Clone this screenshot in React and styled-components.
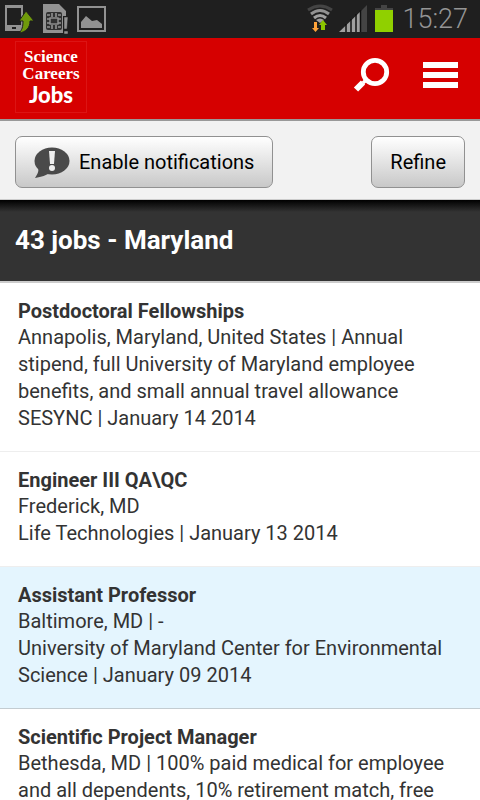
import styled, { createGlobalStyle } from 'styled-components'

const GlobalStyle = createGlobalStyle`
  * {
    box-sizing: border-box;
  }

  body {
    margin: 0;
    font-family: Roboto, 'Liberation Sans', sans-serif;
    background: #ffffff;
    color: #333333;
  }
`

const Page = styled.div`
  display: flex;
  flex-direction: column;
  height: 100vh;
  overflow: hidden;

  > * {
    flex-shrink: 0;
  }
`

const StatusBar = styled.div`
  display: flex;
  justify-content: space-between;
  height: 38px;
  padding: 0 12px 0 4px;
  background: #1f1f1f;
`

const Clock = styled.time`
  margin-left: 4px;
  font-size: 27px;
  font-weight: 300;
  line-height: 38px;
  color: #959595;
`

const StatusGroup = styled.div`
  display: flex;
`

const Header = styled.header`
  display: flex;
  align-items: center;
  justify-content: space-between;
  height: 83px;
  padding: 0 20px 3px 15px;
  background: #d60000;
  border-bottom: 2px solid #999999;
`

const Logo = styled.a`
  display: flex;
  flex-direction: column;
  align-items: center;
  width: 72px;
  height: 72px;
  padding-top: 6px;
  border: 1px solid #dc1414;
  color: #ffffff;
  text-decoration: none;
`

const LogoName = styled.span`
  font-family: 'Liberation Serif', serif;
  font-size: 17px;
  font-weight: 700;
  line-height: 17px;
`

const LogoJobs = styled.span`
  font-family: Lato, sans-serif;
  font-size: 22px;
  font-weight: 900;
  line-height: 26px;
`

const HeaderActions = styled.div`
  display: flex;
  align-items: center;
  gap: 33px;
  padding-bottom: 4px;
`

const IconButton = styled.button`
  display: flex;
  padding: 0;
  border: 0;
  background: none;
  color: #ffffff;
`

const Toolbar = styled.div`
  display: flex;
  align-items: center;
  justify-content: space-between;
  height: 79px;
  padding: 4px 15px 0;
  background: #f2f2f2;
  border-bottom: 1px solid #cccccc;
`

const ToolbarButton = styled.button`
  display: flex;
  align-items: center;
  gap: 9px;
  height: 52px;
  padding: 0 18px;
  border: 1px solid #919191;
  border-radius: 7px;
  background: linear-gradient(#ffffff, #c8c8c8);
  font-family: inherit;
  font-size: 20px;
  color: #000000;
`

const ResultsBar = styled.div`
  height: 83px;
  padding: 0 15px;
  background: linear-gradient(#000000, #333333 12px);
  border-bottom: 2px solid #cccccc;
`

const ResultsTitle = styled.h1`
  margin: 0;
  font-size: 26px;
  font-weight: 700;
  line-height: 80px;
  color: #ffffff;
`

const JobList = styled.ul`
  margin: 0;
  padding: 0;
  list-style: none;
`

const JobItem = styled.li`
  padding: 15px 18px 19px;
  background: ${props => props.$highlighted ? '#e4f5fe' : '#ffffff'};
  border-bottom: 1px solid ${props => props.$highlighted ? '#c3ccd1' : '#eeeeee'};
`

const JobTitle = styled.h2`
  margin: 0;
  font-size: 20px;
  font-weight: 700;
  line-height: 26px;
`

const JobText = styled.p`
  margin: 0;
  font-size: 20px;
  line-height: 27px;
`

const PhoneIcon = () => (
  <svg width="32" height="38" viewBox="0 0 32 38" aria-hidden="true">
    <path d="M1 5h18v26H1zM3 8v17h14V8z" fill="#929292" fillRule="evenodd" />
    <rect x="8" y="27" width="4" height="2" fill="#1f1f1f" />
    <path
      d="M22 11l8 10h-4c0 7-4 11-11 12 3-3 4-6 4-12h-4z"
      fill="#6f9a0b"
      stroke="#1f1f1f"
      strokeWidth="1"
    />
  </svg>
)

const SimIcon = () => (
  <svg width="34" height="38" viewBox="0 0 34 38" aria-hidden="true">
    <path d="M7 4h16l7 7v5h-3v17H7z" fill="#929292" />
    <rect x="10" y="12" width="16" height="18" rx="2" fill="#303030" />
    <path
      d="M11 15h3M11 19h3M11 23h3M11 27h3M22 15h3M22 19h3M22 23h3M22 27h3M16 13v4M20 13v4M16 25v4M20 25v4"
      stroke="#929292"
      strokeWidth="1.6"
    />
    <rect x="14" y="18" width="8" height="6" fill="#303030" stroke="#929292" strokeWidth="1.4" />
    <path d="M28 17h4l-1 12h-3zM28 31h4v3h-4z" fill="#929292" stroke="#1f1f1f" strokeWidth="0.5" />
  </svg>
)

const PictureIcon = () => (
  <svg width="38" height="38" viewBox="0 0 38 38" aria-hidden="true">
    <rect x="8" y="7" width="27" height="24" fill="none" stroke="#929292" strokeWidth="2" />
    <path d="M11 28v-6l5-6 6 5 5-1 5 4v4z" fill="#929292" />
  </svg>
)

const WifiIcon = () => (
  <svg width="36" height="38" viewBox="0 0 36 38" aria-hidden="true">
    <g fill="none" strokeWidth="3">
      <path d="M5 10q12-8 24 0" stroke="#444444" />
      <path d="M8 14q9-7 18 0" stroke="#929292" />
      <path d="M11 18q6-5 12 0" stroke="#a0a0a0" />
    </g>
    <path d="M13 20q4-3 8 0l-4 3z" fill="#a0a0a0" />
    <path d="M11 22h3v6h2l-3.500 4-3.500-4h2z" fill="#ffa43a" />
    <path d="M18 30h4v-5h2l-4-5-4 5h2z" fill="#8bc500" />
  </svg>
)

const SignalIcon = () => (
  <svg width="31" height="38" viewBox="0 0 31 38" aria-hidden="true">
    <path d="M0 32L22 11v21z" fill="#a0a0a0" />
    <path d="M22 11l6-6v27h-6z" fill="#444444" />
    <path d="M7 24v8M12 19v13M17 14v18M21.500 10v22" stroke="#101010" strokeWidth="1.5" />
  </svg>
)

const BatteryIcon = () => (
  <svg width="28" height="38" viewBox="0 0 28 38" aria-hidden="true">
    <path d="M11 5h6v3h6v2H5V8h6z" fill="#444444" />
    <rect x="5" y="10" width="18" height="22" fill="#90d000" />
  </svg>
)

const SearchIcon = () => (
  <svg width="37" height="36" viewBox="0 0 37 36" aria-hidden="true">
    <circle cx="22" cy="15" r="11.700" fill="none" stroke="currentColor" strokeWidth="4.800" />
    <path d="M14 22l-4 4" stroke="currentColor" strokeWidth="3.500" />
    <path d="M10 25.500L3 32.500" stroke="currentColor" strokeWidth="6" />
  </svg>
)

const MenuIcon = () => (
  <svg width="37" height="26" viewBox="0 0 37 26" aria-hidden="true">
    <path d="M0 0h35v6H0zM0 10h35v6H0zM0 20h35v6H0z" fill="currentColor" />
  </svg>
)

const AlertIcon = () => (
  <svg width="36" height="32" viewBox="0 0 36 32" aria-hidden="true">
    <ellipse cx="18" cy="15" rx="17.500" ry="13.500" fill="#4a4a4a" />
    <path d="M4 21c1 4 0 6-3 11 7-1 11-3 15-5z" fill="#4a4a4a" />
    <path d="M15 5h6l-1 13h-4z" fill="#eeeeee" />
    <circle cx="18" cy="22" r="3" fill="#eeeeee" />
  </svg>
)

const jobs = [
  {
    title: 'Postdoctoral Fellowships',
    summary: 'Annapolis, Maryland, United States | Annual stipend, full University of Maryland employee benefits, and small annual travel allowance',
    employer: 'SESYNC | January 14 2014',
  },
  {
    title: 'Engineer III QA\\QC',
    summary: 'Frederick, MD',
    employer: 'Life Technologies | January 13 2014',
  },
  {
    title: 'Assistant Professor',
    summary: 'Baltimore, MD | -',
    employer: 'University of Maryland Center for Environmental Science | January 09 2014',
    highlighted: true,
  },
  {
    title: 'Scientific Project Manager',
    summary: 'Bethesda, MD | 100% paid medical for employee and all dependents, 10% retirement match, free',
  },
]

export default function App() {
  return (
    <>
      <GlobalStyle />
      <Page>
        <StatusBar>
          <StatusGroup>
            <PhoneIcon />
            <SimIcon />
            <PictureIcon />
          </StatusGroup>
          <StatusGroup>
            <WifiIcon />
            <SignalIcon />
            <BatteryIcon />
            <Clock>15:27</Clock>
          </StatusGroup>
        </StatusBar>
        <Header>
          <Logo href="#">
            <LogoName>Science</LogoName>
            <LogoName>Careers</LogoName>
            <LogoJobs>Jobs</LogoJobs>
          </Logo>
          <HeaderActions>
            <IconButton aria-label="Search">
              <SearchIcon />
            </IconButton>
            <IconButton aria-label="Menu">
              <MenuIcon />
            </IconButton>
          </HeaderActions>
        </Header>
        <Toolbar>
          <ToolbarButton>
            <AlertIcon />
            Enable notifications
          </ToolbarButton>
          <ToolbarButton>Refine</ToolbarButton>
        </Toolbar>
        <ResultsBar>
          <ResultsTitle>43 jobs - Maryland</ResultsTitle>
        </ResultsBar>
        <JobList>
          {jobs.map(job => (
            <JobItem key={job.title} $highlighted={job.highlighted}>
              <JobTitle>{job.title}</JobTitle>
              <JobText>{job.summary}</JobText>
              {job.employer && <JobText>{job.employer}</JobText>}
            </JobItem>
          ))}
        </JobList>
      </Page>
    </>
  )
}
